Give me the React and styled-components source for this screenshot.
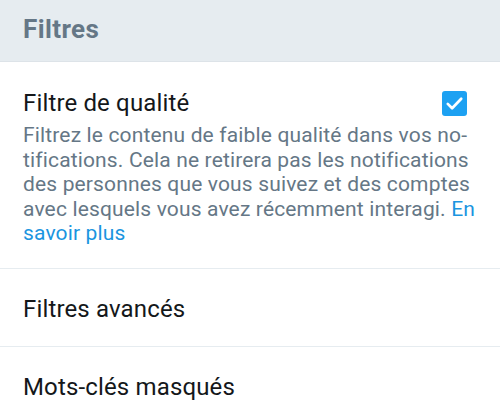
import React from 'react'
import styled, { createGlobalStyle } from 'styled-components'

const GlobalStyle = createGlobalStyle`
  body {
    margin: 0;
    background: #ffffff;
    font-family: Roboto, "Liberation Sans", sans-serif;
  }
`

const App = () => {
  return (
    <Page>
      <GlobalStyle />
      <SectionHeader>
        <h1>Filtres</h1>
      </SectionHeader>
      <Row>
        <RowTop>
          <RowTitle>Filtre de qualité</RowTitle>
          <Checkbox>
            <svg width="19" height="19" viewBox="0 0 24 24" fill="none">
              <path d="M3.5 12.5l5.5 5.5L20.5 6" stroke="#fff" strokeWidth="3.4" strokeLinecap="round" strokeLinejoin="round" />
            </svg>
          </Checkbox>
        </RowTop>
        <Description>
          Filtrez le contenu de faible qualité dans vos no&shy;tifications. Cela ne retirera pas les notifications
          des personnes que vous suivez et des comptes avec lesquels vous avez récemment interagi. <a href="#">En savoir plus</a>
        </Description>
      </Row>
      <LinkRow>Filtres avancés</LinkRow>
      <LinkRow>Mots-clés masqués</LinkRow>
    </Page>
  )
}

export default App

const Page = styled.div`
  width: 500px;
  min-height: 413px;
  background: #fff;
`

const SectionHeader = styled.div`
  height: 62px;
  background: #e6ecf0;
  border-bottom: 1px solid #dde3e8;
  padding: 14px 23px 0;
  box-sizing: border-box;

  > h1 {
    margin: 0;
    font-size: 26px;
    line-height: 30px;
    font-weight: 700;
    letter-spacing: 0.4px;
    color: #657786;
  }
`

const Row = styled.div`
  padding: 26px 19px 22px 23px;
  border-bottom: 1px solid #e6ecf0;
`

const RowTop = styled.div`
  display: flex;
  align-items: center;
  justify-content: space-between;
  padding-right: 14px;
`

const RowTitle = styled.div`
  font-size: 24px;
  line-height: 30px;
  letter-spacing: 0.15px;
  color: #14171a;
`

const Checkbox = styled.div`
  width: 25px;
  height: 25px;
  border-radius: 3px;
  background: #1da1f2;
  display: flex;
  align-items: center;
  justify-content: center;
`

const Description = styled.p`
  margin: 5px 0 0;
  font-size: 21px;
  line-height: 24.5px;
  letter-spacing: 0.15px;
  color: #657786;
  hyphens: manual;

  > a {
    color: #1b95e0;
    text-decoration: none;
  }
`

const LinkRow = styled.div`
  padding: 25px 23px 22px;
  font-size: 24px;
  line-height: 30px;
  letter-spacing: 0.15px;
  color: #14171a;
  border-bottom: 1px solid #e6ecf0;
`
